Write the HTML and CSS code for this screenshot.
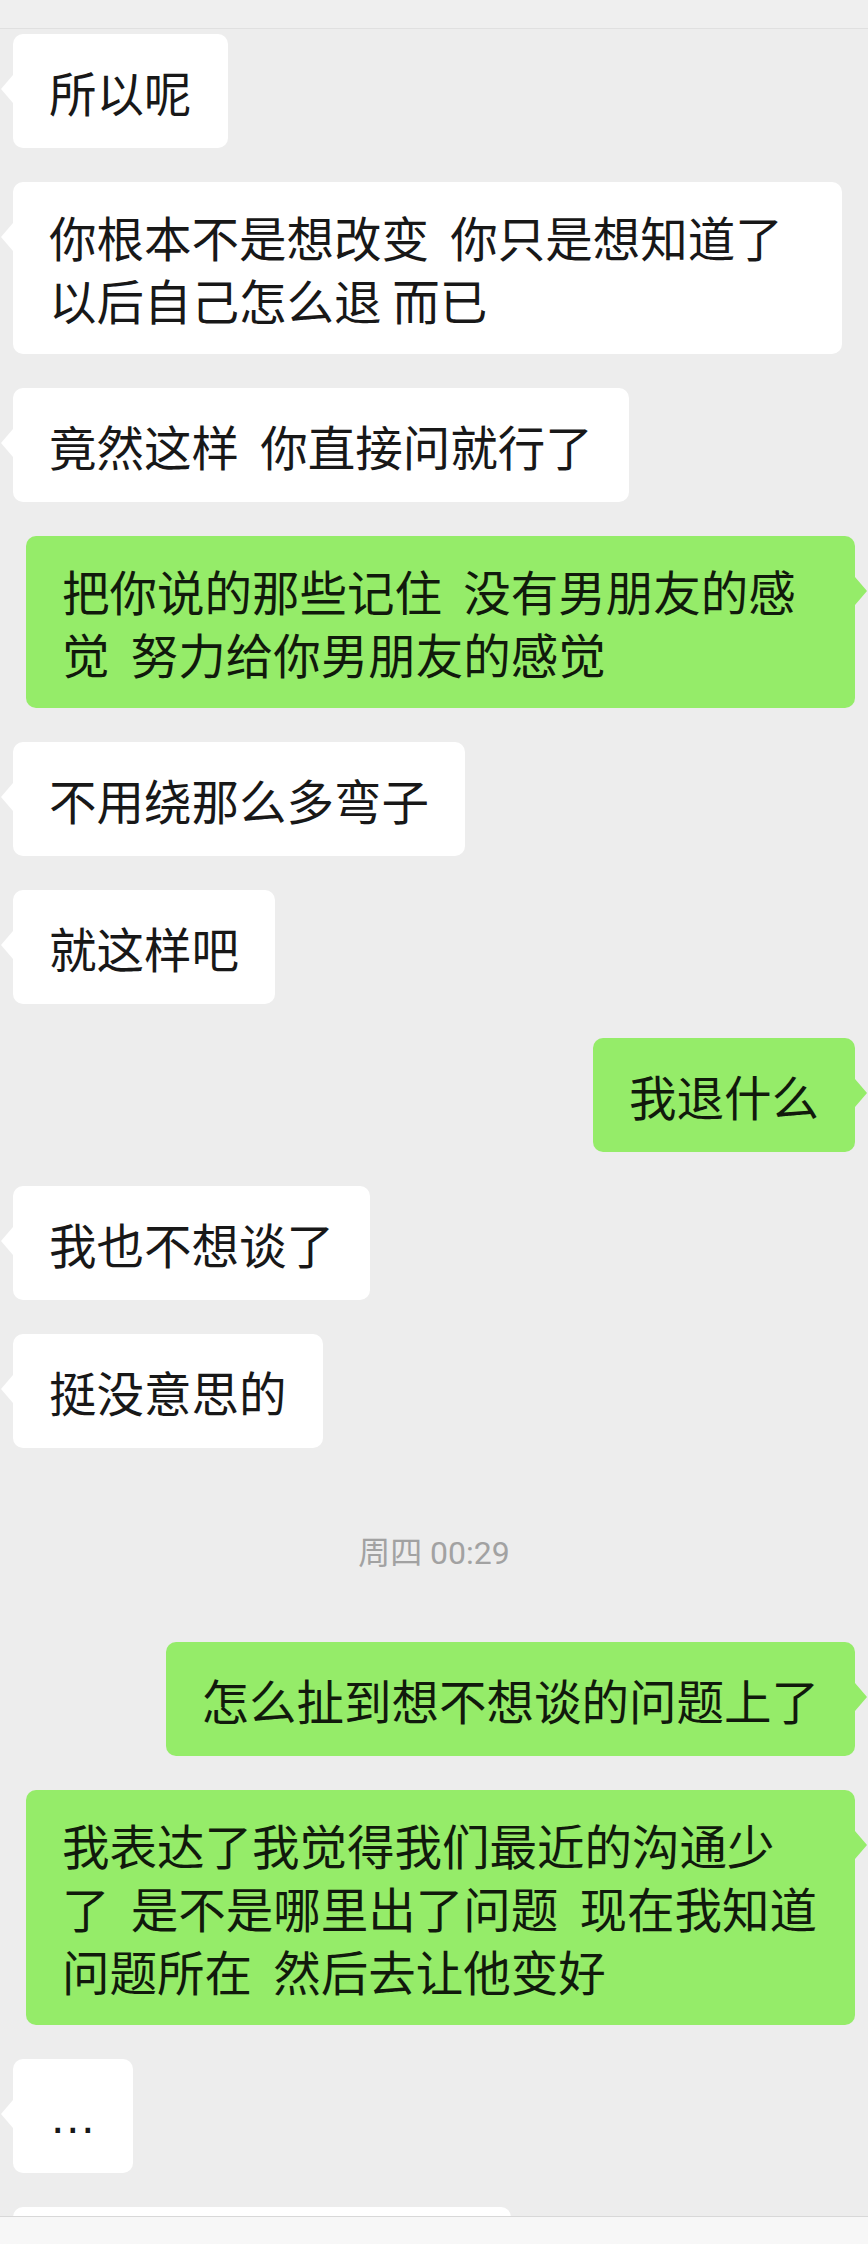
FILE: index.html
```html
<!DOCTYPE html>
<html lang="zh-CN">
<head>
    <meta charset="UTF-8">
    <meta name="viewport" content="width=device-width, initial-scale=1.0">
    <title>聊天</title>
    <link rel="stylesheet" href="styles.css">
</head>
<body>
<div class="topbar"></div>

<div class="chat">
    <div class="row in"><div class="bubble">所以呢</div></div>
    <div class="row in"><div class="bubble">你根本不是想改变  你只是想知道了以后自己怎么退 而已</div></div>
    <div class="row in"><div class="bubble">竟然这样  你直接问就行了</div></div>
    <div class="row out"><div class="bubble">把你说的那些记住  没有男朋友的感觉  努力给你男朋友的感觉</div></div>
    <div class="row in"><div class="bubble">不用绕那么多弯子</div></div>
    <div class="row in"><div class="bubble">就这样吧</div></div>
    <div class="row out"><div class="bubble">我退什么</div></div>
    <div class="row in"><div class="bubble">我也不想谈了</div></div>
    <div class="row in"><div class="bubble">挺没意思的</div></div>

    <div class="time">周四 00:29</div>

    <div class="row out"><div class="bubble">怎么扯到想不想谈的问题上了</div></div>
    <div class="row out"><div class="bubble">我表达了我觉得我们最近的沟通少了  是不是哪里出了问题  现在我知道问题所在  然后去让他变好</div></div>
    <div class="row in"><div class="bubble"><span class="dots">…</span></div></div>
    <div class="row in"><div class="bubble peek"></div></div>
</div>

<div class="inputbar"></div>
</body>
</html>
```

FILE: styles.css
```css
body {
    margin: 0;
    height: 2244px;
    overflow: hidden;
    position: relative;
    background-color: #ededed;
    font-family: "Noto Sans CJK SC", "Noto Sans", sans-serif;
    color: #181818;
}

.topbar {
    height: 28px;
    background-color: #efefef;
    border-bottom: 1px solid #e0e0e0;
}

.chat {
    display: flex;
    flex-direction: column;
    gap: 34px;
    padding: 5px 13px 0 13px;
}

.row {
    display: flex;
}

.row.out {
    justify-content: flex-end;
}

.bubble {
    position: relative;
    display: flex;
    align-items: center;
    box-sizing: border-box;
    max-width: 829px;
    min-height: 114px;
    padding: 23px 36px;
    border-radius: 10px;
    background-color: #ffffff;
    font-size: 47.5px;
    line-height: 63px;
    white-space: pre-wrap;
}

/* little triangle pointing at the sender */
.bubble::before {
    content: "";
    position: absolute;
    top: 41px;
    border-top: 14px solid transparent;
    border-bottom: 14px solid transparent;
}

.in .bubble::before {
    left: -12px;
    border-right: 12px solid #ffffff;
}

.out .bubble {
    background-color: #95ec69;
    color: #111a0c;
}

.out .bubble::before {
    right: -12px;
    border-left: 12px solid #95ec69;
}

.dots {
    font-family: "Liberation Sans", sans-serif;
}

.bubble.peek {
    width: 498px;
}

.time {
    padding: 51px 0 35px;
    text-align: center;
    font-family: Roboto, "Noto Sans CJK SC", sans-serif;
    font-size: 32px;
    line-height: 40px;
    color: #a2a2a2;
}

.inputbar {
    position: absolute;
    left: 0;
    right: 0;
    bottom: 0;
    height: 27px;
    background-color: #f7f7f7;
    border-top: 1px solid #d8d8d8;
}
```
